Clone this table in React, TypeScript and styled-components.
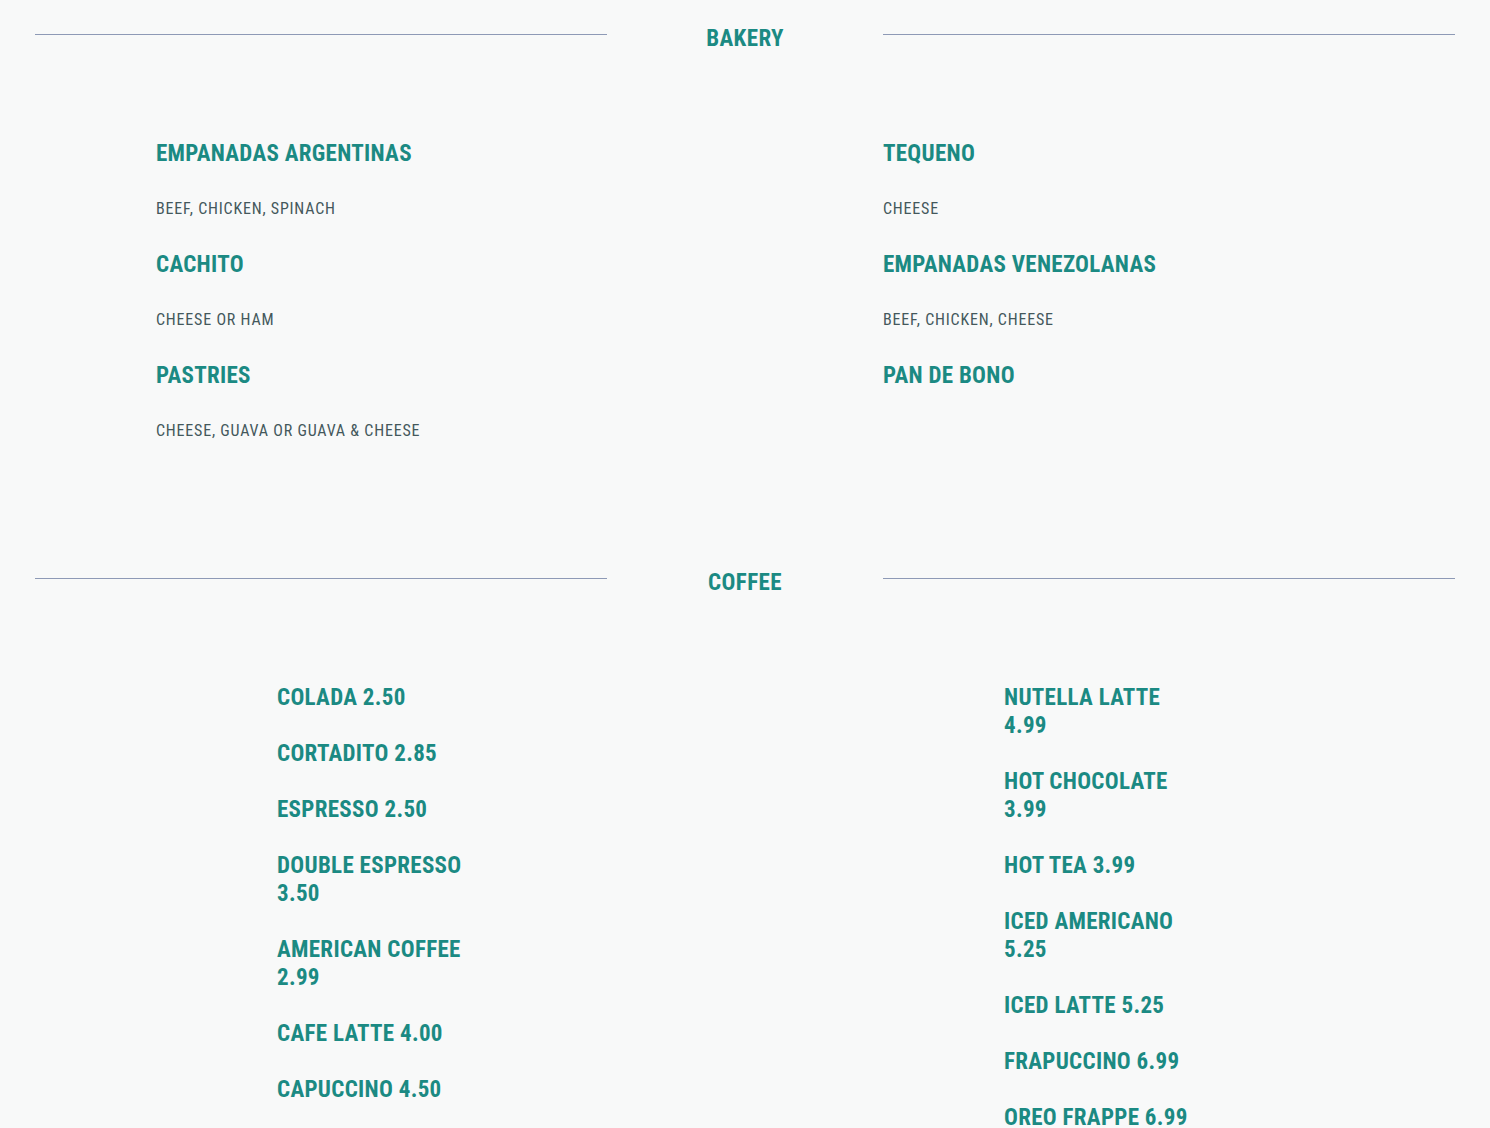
import React from 'react';
import styled, { createGlobalStyle } from 'styled-components';

const GlobalStyle = createGlobalStyle`
  html, body {
    margin: 0;
    padding: 0;
    background: #f8f9f9;
  }
  body {
    font-family: "Roboto Condensed", Roboto, "Liberation Sans", sans-serif;
  }
`;

interface IItem {
    name: string;
    desc?: string;
}

const bakery: IItem[][] = [
    [
        { name: 'Empanadas Argentinas', desc: 'Beef, Chicken, Spinach' },
        { name: 'Cachito', desc: 'Cheese or Ham' },
        { name: 'Pastries', desc: 'Cheese, Guava or Guava & Cheese' },
    ],
    [
        { name: 'Tequeno', desc: 'Cheese' },
        { name: 'Empanadas Venezolanas', desc: 'Beef, Chicken, Cheese' },
        { name: 'Pan de Bono' },
    ],
];

const coffee: string[][] = [
    ['Colada 2.50', 'Cortadito 2.85', 'Espresso 2.50', 'Double Espresso 3.50', 'American Coffee 2.99', 'Cafe Latte 4.00', 'Capuccino 4.50'],
    ['Nutella Latte 4.99', 'Hot Chocolate 3.99', 'Hot Tea 3.99', 'Iced Americano 5.25', 'Iced Latte 5.25', 'Frapuccino 6.99', 'Oreo Frappe 6.99'],
];

export default function App() {
    return (
        <Page>
            <GlobalStyle />
            <BakerySection>
                <Header>
                    <Rule />
                    <HeaderTitle>Bakery</HeaderTitle>
                    <Rule />
                </Header>
                <BakeryGrid>
                    {bakery.map((col, i) => (
                        <Column key={i}>
                            {col.map((item) => (
                                <BakeryItem key={item.name}>
                                    <ItemName>{item.name}</ItemName>
                                    {item.desc && <ItemDesc>{item.desc}</ItemDesc>}
                                </BakeryItem>
                            ))}
                        </Column>
                    ))}
                </BakeryGrid>
            </BakerySection>
            <section>
                <Header>
                    <Rule />
                    <HeaderTitle>Coffee</HeaderTitle>
                    <Rule />
                </Header>
                <CoffeeGrid>
                    {coffee.map((col, i) => (
                        <Column key={i}>
                            {col.map((name) => (
                                <CoffeeItem key={name}>{name}</CoffeeItem>
                            ))}
                        </Column>
                    ))}
                </CoffeeGrid>
            </section>
        </Page>
    );
}

const Page = styled.div`
    padding: 1px 35px 0;
    height: 1128px;
    box-sizing: border-box;
    overflow: hidden;
`;

const BakerySection = styled.section`
    padding-bottom: 72px;
`;

const Header = styled.div`
    display: flex;
    align-items: center;
    height: 76px;
`;

const Rule = styled.div`
    flex: 1;
    align-self: flex-start;
    height: 1px;
    margin-top: 33px;
    background: #8e9ab6;
`;

const HeaderTitle = styled.h2`
    width: 276px;
    margin: 0;
    text-align: center;
    color: #1b8a83;
    font-size: 23px;
    font-weight: 700;
    letter-spacing: 0.4px;
    line-height: 28px;
    text-transform: uppercase;
`;

const BakeryGrid = styled.div`
    display: grid;
    grid-template-columns: 727px 1fr;
    padding-left: 121px;
    margin-top: 63px;
`;

const Column = styled.div`
    display: flex;
    flex-direction: column;
`;

const BakeryItem = styled.div`
    height: 111px;
`;

const ItemName = styled.div`
    color: #1b8a83;
    font-size: 23px;
    font-weight: 700;
    letter-spacing: 0.3px;
    line-height: 28px;
    text-transform: uppercase;
`;

const ItemDesc = styled.div`
    margin-top: 31px;
    color: #44585c;
    font-size: 16px;
    letter-spacing: 0.8px;
    line-height: 20px;
    text-transform: uppercase;
`;

const CoffeeGrid = styled.div`
    display: grid;
    grid-template-columns: 727px 1fr;
    padding-left: 242px;
    margin-top: 63px;
`;

const CoffeeItem = styled.div`
    max-width: 200px;
    margin-bottom: 28px;
    color: #1b8a83;
    font-size: 23px;
    font-weight: 700;
    letter-spacing: 0.3px;
    line-height: 28px;
    text-transform: uppercase;
`;
